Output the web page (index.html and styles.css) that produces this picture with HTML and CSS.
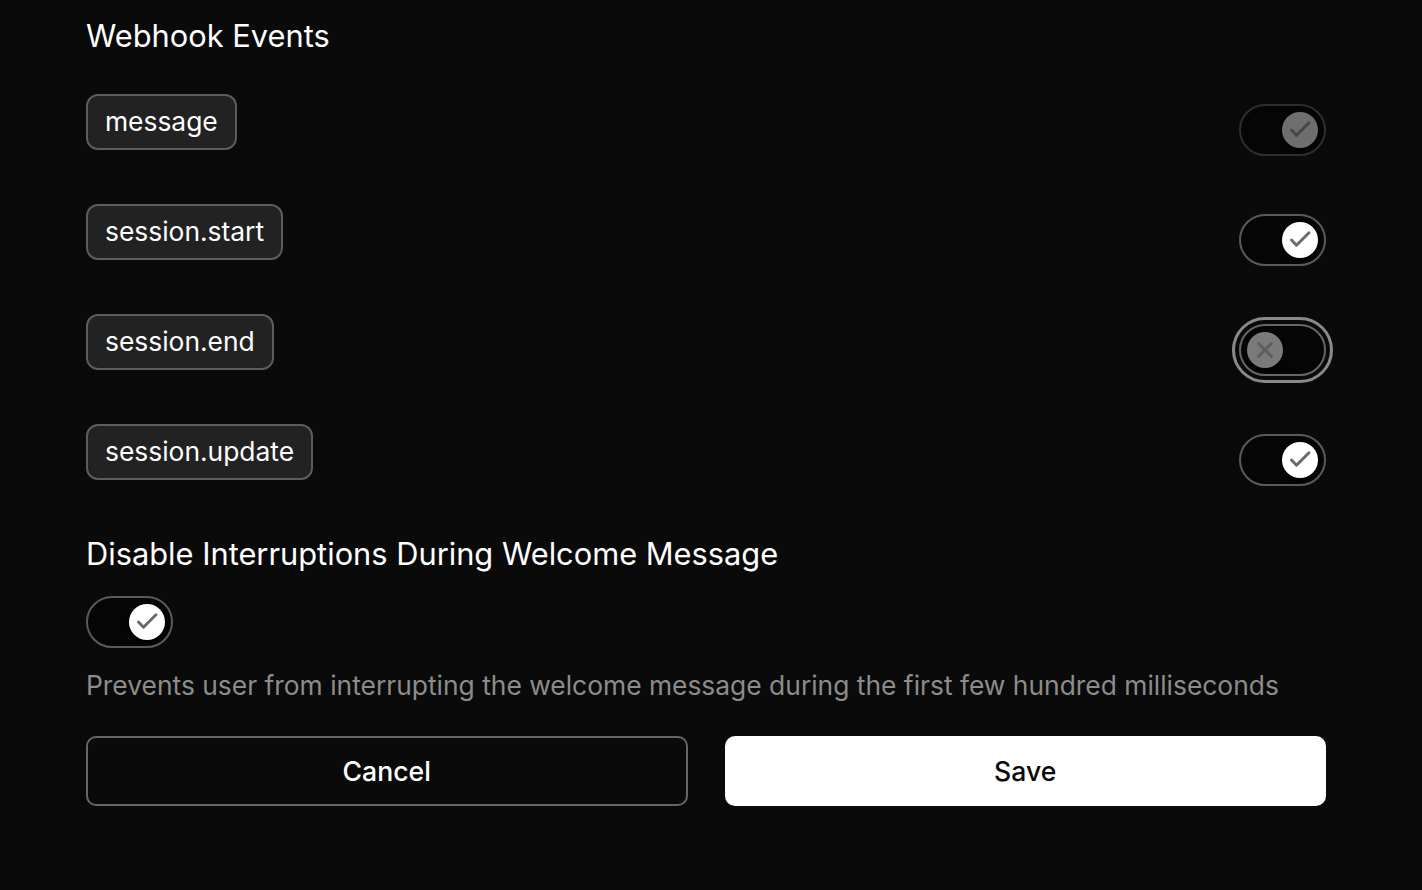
FILE: index.html
```html
<!DOCTYPE html>
<html lang="en">
<head>
<meta charset="utf-8">
<title>Webhook Events</title>
<link rel="stylesheet" href="styles.css">
</head>
<body>
<main class="panel">
  <h2 class="section-title">Webhook Events</h2>
  <div class="events">
    <div class="event-row">
      <span class="tag">message</span>
      <span class="switch switch--on switch--disabled">
        <span class="thumb"><svg viewBox="0 0 36 36"><path d="M9.5 18l5 5.2 12.5-12.4"/></svg></span>
      </span>
    </div>
    <div class="event-row">
      <span class="tag">session.start</span>
      <span class="switch switch--on">
        <span class="thumb"><svg viewBox="0 0 36 36"><path d="M9.5 18l5 5.2 12.5-12.4"/></svg></span>
      </span>
    </div>
    <div class="event-row">
      <span class="tag">session.end</span>
      <span class="switch switch--off switch--focus">
        <span class="thumb"><svg viewBox="0 0 36 36"><path d="M11.5 11.5l13 13M24.5 11.5l-13 13"/></svg></span>
      </span>
    </div>
    <div class="event-row">
      <span class="tag">session.update</span>
      <span class="switch switch--on">
        <span class="thumb"><svg viewBox="0 0 36 36"><path d="M9.5 18l5 5.2 12.5-12.4"/></svg></span>
      </span>
    </div>
  </div>

  <h2 class="section-title section-title--second">Disable Interruptions During Welcome Message</h2>
  <span class="switch switch--on">
    <span class="thumb"><svg viewBox="0 0 36 36"><path d="M9.5 18l5 5.2 12.5-12.4"/></svg></span>
  </span>
  <p class="hint">Prevents user from interrupting the welcome message during the first few hundred milliseconds</p>

  <div class="actions">
    <button class="btn btn--outline" type="button">Cancel</button>
    <button class="btn btn--primary" type="button">Save</button>
  </div>
</main>
</body>
</html>
```

FILE: styles.css
```css
* { box-sizing: border-box; }

html, body {
  margin: 0;
  background: #0a0a0a;
  color: #ffffff;
  font-family: Inter, "Noto Sans", sans-serif;
}

.panel {
  width: 1240px;
  margin-left: 86px;
  padding-top: 16px;
  display: flex;
  flex-direction: column;
  align-items: flex-start;
}

.section-title {
  margin: 0;
  font-size: 30.8px;
  font-weight: 400;
  line-height: 40px;
  letter-spacing: 0;
}

.events {
  width: 100%;
  margin-top: 38px;
  display: flex;
  flex-direction: column;
  gap: 48px;
}

.event-row {
  display: flex;
  justify-content: space-between;
  align-items: flex-start;
}

.tag {
  display: inline-flex;
  align-items: center;
  height: 56px;
  padding: 0 17px 1px;
  background: #222222;
  border: 2px solid #5c5c5c;
  border-radius: 12px;
  font-size: 26.4px;
  line-height: 1;
  color: #ffffff;
}

.switch {
  position: relative;
  display: inline-flex;
  align-items: center;
  width: 87px;
  height: 52px;
  border: 2px solid #5a5a5a;
  border-radius: 26px;
  background: #050505;
  padding: 0 6px;
  flex-shrink: 0;
}

.event-row .switch { margin-top: 10px; }

.switch--on { justify-content: flex-end; }
.switch--off { justify-content: flex-start; }

.thumb {
  width: 36px;
  height: 36px;
  border-radius: 50%;
  background: #ffffff;
  box-shadow: 0 3px 3px rgba(0, 0, 0, 0.75);
  display: flex;
  align-items: center;
  justify-content: center;
}

.thumb svg {
  width: 36px;
  height: 36px;
  fill: none;
  stroke: #6b6b6b;
  stroke-width: 3;
  stroke-linecap: round;
  stroke-linejoin: round;
}

.switch--disabled { border-color: #2e2e2e; }
.switch--disabled .thumb { background: #6e6e6e; }
.switch--disabled .thumb svg { stroke: #464646; }

.switch--off .thumb { background: #7a7a7a; }
.switch--off .thumb svg { stroke: #5e5e5e; }

.switch--focus {
  border-color: #666666;
  outline: 3px solid #8a8a8a;
  outline-offset: 4px;
}

.section-title--second {
  margin-top: 48px;
  margin-bottom: 22px;
}

.hint {
  margin: 19px 0 0;
  font-size: 26.4px;
  line-height: 36px;
  color: #8c8c8c;
}

.actions {
  width: 100%;
  margin-top: 33px;
  display: grid;
  grid-template-columns: 1fr 1fr;
  gap: 37px;
}

.btn {
  height: 70px;
  border-radius: 10px;
  font-family: Inter, "Noto Sans", sans-serif;
  font-size: 26.6px;
  font-weight: 500;
  cursor: pointer;
}

.btn--outline {
  background: #0a0a0a;
  color: #ffffff;
  border: 2px solid #666666;
}

.btn--primary {
  background: #ffffff;
  color: #0a0a0a;
  border: 2px solid #ffffff;
}
```
